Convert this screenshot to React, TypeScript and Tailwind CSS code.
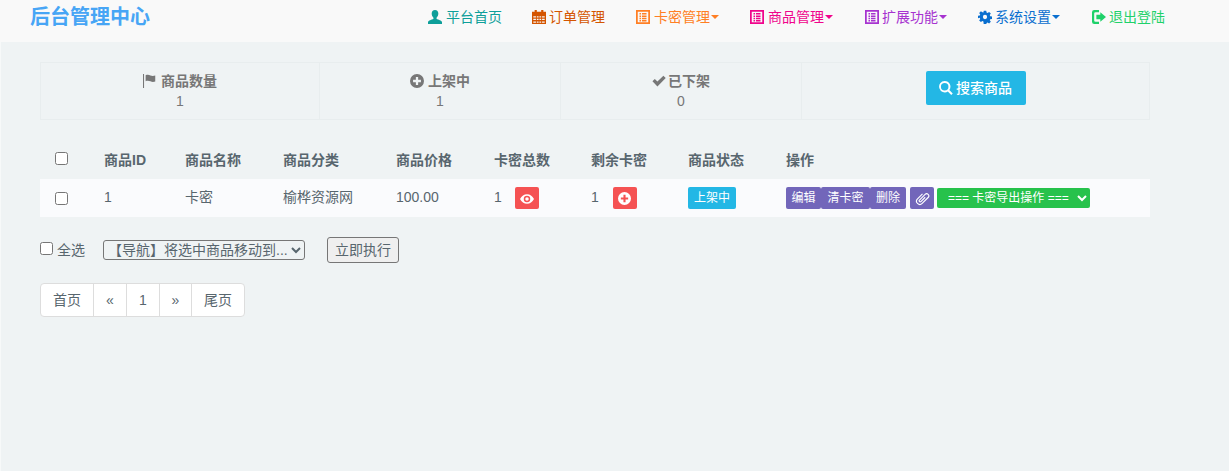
import React from "react";

const Icon = ({ children, className = "" }: { children: React.ReactNode; className?: string }) => (
  <svg viewBox="0 0 16 16" className={`shrink-0 fill-current ${className}`} aria-hidden="true">{children}</svg>
);

type P = { className?: string };

const User = ({ className }: P) => (
  <Icon className={className}><path d="M8 0c2.500 0 3.800 1.800 3.800 4.100 0 2-.9 3.700-2 4.700v1.500c1.900.7 5.900 1.800 6.200 3.500V16H0v-2.200c.3-1.700 4.300-2.800 6.200-3.500V8.800c-1.100-1-2-2.700-2-4.700C4.200 1.800 5.500 0 8 0z" /></Icon>
);
const Calendar = ({ className }: P) => (
  <Icon className={className}><path fillRule="evenodd" d="M3 0h2.500v2h5V0H13v2h3v14H0V2h3V0zM1.500 7v1.500h13V7h-13zm0 3v1.500h13V10h-13zm0 3v1.500h13V13h-13z" /><path d="M4.500 6h1v9h-1zM7.500 6h1v9h-1zM10.500 6h1v9h-1z" /></Icon>
);
const ListAlt = ({ className }: P) => (
  <Icon className={className}><path fillRule="evenodd" d="M0 0h16v16H0V0zm2 2v12h12V2H2zM4 3.500h1.700v1.700H4V3.500zm2.800 0H12v1.700H6.800V3.500zM4 6.200h1.700v1.700H4V6.200zm2.800 0H12v1.700H6.800V6.200zM4 8.900h1.700v1.700H4V8.900zm2.800 0H12v1.700H6.800V8.900zM4 11.300h1.700V13H4v-1.700zm2.800 0H12V13H6.800v-1.700z" /></Icon>
);
const Cog = ({ className }: P) => (
  <Icon className={className}><path fillRule="evenodd" d="M6.400 0h3.200l.4 2.300 1.300.5 1.900-1.300 2.200 2.200-1.300 1.900.5 1.300 2.300.4v3.200l-2.300.4-.5 1.300 1.300 1.900-2.200 2.200-1.900-1.300-1.300.5-.4 2.300H6.400L6 13.700l-1.300-.5-1.900 1.300-2.200-2.200 1.300-1.900-.5-1.300L-.9 9.700V6.400L1.400 6l.5-1.300L.6 2.800l2.200-2.200 1.900 1.300L6 2.300 6.400 0zM8 5.300a2.700 2.700 0 100 5.400 2.700 2.700 0 000-5.400z" transform="translate(.8 .8) scale(.9)" /></Icon>
);
const LogOut = ({ className }: P) => (
  <Icon className={className}><path d="M2.500 0H8v2.500H4A1.500 1.500 0 002.500 4v8A1.500 1.500 0 004 13.500h4V16H2.500A2.500 2.500 0 010 13.500v-11A2.500 2.500 0 012.500 0z" /><path d="M9.500 2.500L16 8l-6.500 5.500V10.500H5v-5h4.500v-3z" /></Icon>
);
const Flag = ({ className }: P) => (
  <Icon className={className}><path d="M0 0h1.200v16H0V0zM3 1.500c2.200-1 3.800-.5 5.500.2 1.700.7 3.500.8 5.500 0v6.800c-2 .8-3.800.6-5.500-.1-1.700-.7-3.300-1.100-5.500-.2V1.500z" /></Icon>
);
const PlusSign = ({ className }: P) => (
  <Icon className={className}><path fillRule="evenodd" d="M8 0a8 8 0 110 16A8 8 0 018 0zM6.700 3.500v3.200H3.500v2.600h3.200v3.200h2.600V9.300h3.200V6.700H9.300V3.500H6.700z" /></Icon>
);
const Check = ({ className }: P) => (
  <Icon className={className}><path d="M.5 8.300l2.700-2.700 3 3L13 2l2.700 2.700-9.500 9.500L.5 8.300z" /></Icon>
);
const Search = ({ className }: P) => (
  <Icon className={className}><path fillRule="evenodd" d="M6.500 0a6.500 6.500 0 015.300 10.300l3.900 3.900-1.700 1.700-3.900-3.900A6.500 6.500 0 116.500 0zm0 2.200a4.300 4.300 0 100 8.600 4.300 4.300 0 000-8.600z" /></Icon>
);
const Eye = ({ className }: P) => (
  <Icon className={className}><path fillRule="evenodd" d="M8 2.500c3.300 0 6.200 2.200 8 5.500-1.800 3.300-4.700 5.500-8 5.500S1.800 11.300 0 8c1.800-3.300 4.700-5.500 8-5.500zM8 4.300a3.700 3.700 0 100 7.400 3.700 3.700 0 000-7.400zM8 6a2 2 0 110 4 2 2 0 010-4z" /></Icon>
);
const Clip = ({ className }: P) => (
  <svg viewBox="0 0 16 16" className={`shrink-0 fill-none stroke-current ${className}`} strokeWidth="1.200" aria-hidden="true">
    <path transform="rotate(45 8 8)" d="M4.500 4.500v7.500a3.500 3.500 0 007 0V3a2.300 2.300 0 00-4.600 0v8.500a1.100 1.100 0 002.200 0V5" />
  </svg>
);

const Caret = ({ className }: P) => (
  <span className={`ml-px h-0 w-0 border-x-4 border-t-4 border-x-transparent ${className}`} />
);

const navItems = [
  { label: "平台首页", Ico: User, color: "text-[#0e9f9a]", w: "w-[74px]", gap: "mr-1" },
  { label: "订单管理", Ico: Calendar, color: "text-[#d45500]", w: "w-[74px]", gap: "mr-[3px]" },
  { label: "卡密管理", Ico: ListAlt, color: "text-[#ff7f24]", caret: "border-t-[#ff7f24]", w: "w-[84px]", gap: "mr-1" },
  { label: "商品管理", Ico: ListAlt, color: "text-[#f0048c]", caret: "border-t-[#f0048c]", w: "w-[85px]", gap: "mr-1" },
  { label: "扩展功能", Ico: ListAlt, color: "text-[#a733d0]", caret: "border-t-[#a733d0]", w: "w-[83px]", gap: "mr-[3px]" },
  { label: "系统设置", Ico: Cog, color: "text-[#0a6fcf]", caret: "border-t-[#0a6fcf]", w: "w-[84px]", gap: "mr-[3px]" },
  { label: "退出登陆", Ico: LogOut, color: "text-[#1fd16a]", w: "w-[74px]", gap: "mr-[3px]" },
];

const th = "h-[38px] pl-[15px] text-left align-middle font-bold text-[#58666e]";
const td = "h-[38px] pl-[15px] align-middle font-normal text-[#58666e]";
const tdText = "h-[38px] pb-0.5 pl-[15px] align-middle font-normal text-[#58666e]";
const statCell = "flex flex-col items-center border-r border-[#e8edee] pt-2 text-[#777]";

export default function App() {
  return (
    <div className="flex min-h-[471px] flex-col bg-[#eff3f4] font-['Liberation_Sans','Noto_Sans_CJK_SC',sans-serif] text-sm text-[#58666e]">
      <header className="flex h-[42px] items-start bg-[#f9f9f9]">
        <h1 className="ml-[30px] h-[34px] text-xl leading-[34px] font-bold text-[#47a5f5]">后台管理中心</h1>
        <nav className="ml-[278px] flex h-[34px] items-center gap-[30px]">
          {navItems.map(({ label, Ico, color, caret, w, gap }) => (
            <a key={label} href="#" className={`flex items-center ${w} ${color}`}>
              <Ico className={`h-[14px] w-[14px] ${gap}`} />
              <span>{label}</span>
              {caret && <Caret className={caret} />}
            </a>
          ))}
        </nav>
      </header>

      <main className="flex-1 border-l border-[#f7f9f9] pr-10 pl-[39px] pt-5">
        <section className="flex h-[58px] w-[1110px] border border-[#e8edee]">
          <div className={`w-[279px] ${statCell}`}>
            <div className="flex items-center gap-1 leading-5 font-bold"><Flag className="h-[14px] w-[14px]" />商品数量</div>
            <div className="leading-5">1</div>
          </div>
          <div className={`w-[241px] ${statCell}`}>
            <div className="flex items-center gap-1 leading-5 font-bold"><PlusSign className="h-[14px] w-[14px]" />上架中</div>
            <div className="leading-5">1</div>
          </div>
          <div className={`w-[241px] ${statCell}`}>
            <div className="flex items-center gap-0.5 leading-5 font-bold"><Check className="h-[14px] w-[14px]" />已下架</div>
            <div className="leading-5">0</div>
          </div>
          <div className="flex flex-1 justify-center pt-2">
            <button className="flex h-[34px] w-[100px] items-center justify-center gap-[3px] rounded-[2px] bg-[#23b7e5] font-medium text-white">
              <Search className="h-[14px] w-[14px]" />搜索商品
            </button>
          </div>
        </section>

        <table className="mt-[21px] w-[1110px] table-fixed border-collapse">
          <colgroup>
            <col className="w-[49px]" /><col className="w-[81px]" /><col className="w-[98px]" /><col className="w-[113px]" />
            <col className="w-[98px]" /><col className="w-[97px]" /><col className="w-[97px]" /><col className="w-[98px]" /><col />
          </colgroup>
          <thead>
            <tr>
              <th className={th}><input type="checkbox" className="mb-[3px] block" /></th>
              <th className={th}>商品ID</th>
              <th className={th}>商品名称</th>
              <th className={th}>商品分类</th>
              <th className={th}>商品价格</th>
              <th className={th}>卡密总数</th>
              <th className={th}>剩余卡密</th>
              <th className={th}>商品状态</th>
              <th className={th}>操作</th>
            </tr>
          </thead>
          <tbody>
            <tr className="bg-[#fafbfd]">
              <td className={td}><input type="checkbox" className="block" /></td>
              <td className={tdText}>1</td>
              <td className={tdText}>卡密</td>
              <td className={tdText}>榆桦资源网</td>
              <td className={tdText}>100.00</td>
              <td className={td}>
                <div className="flex items-center">
                  <span className="mb-0.5">1</span><span className="ml-[13px] flex h-[22px] w-6 items-center justify-center rounded-[2px] bg-[#f55253] text-white"><Eye className="mt-0.5 h-[14px] w-[14px]" /></span>
                </div>
              </td>
              <td className={td}>
                <div className="flex items-center">
                  <span className="mb-0.5">1</span><span className="ml-[14px] flex h-[22px] w-6 items-center justify-center rounded-[2px] bg-[#f55253] text-white"><PlusSign className="h-[13px] w-[13px]" /></span>
                </div>
              </td>
              <td className={td}>
                <span className="flex h-[22px] w-12 items-center justify-center rounded-[2px] bg-[#23b7e5] text-xs text-white">上架中</span>
              </td>
              <td className={td}>
                <div className="flex items-center text-xs text-white">
                  <div className="flex h-[22px]">
                    <span className="flex w-[35px] items-center justify-center rounded-[2px] bg-[#7266ba]">编辑</span>
                    <span className="flex w-[49px] items-center justify-center rounded-[2px] bg-[#7266ba]">清卡密</span>
                    <span className="flex w-9 items-center justify-center rounded-[2px] bg-[#7266ba]">删除</span>
                  </div>
                  <span className="ml-1 flex h-[22px] w-6 items-center justify-center rounded-[2px] bg-[#7266ba]"><Clip className="h-[15px] w-[15px]" /></span>
                  <select className="ml-[3px] h-5 w-[153px] rounded-[2px] bg-[#27c24c] pl-[7px] text-white">
                    <option>=== 卡密导出操作 ===</option>
                  </select>
                </div>
              </td>
            </tr>
          </tbody>
        </table>

        <div className="mt-5 flex items-center">
          <label className="flex items-center gap-1">
            <input type="checkbox" className="mb-[3px] block" />全选
          </label>
          <select className="ml-[18px] h-5 w-[202px] rounded-[3px] border border-[#767676] text-[#58666e]">
            <option>【导航】将选中商品移动到...</option>
          </select>
          <button className="ml-[22px] h-[26px] w-[72px] rounded-[3px] border border-[#767676] bg-[#efefef] text-[#58666e]">立即执行</button>
        </div>

        <nav className="mt-5 flex h-[34px] w-fit rounded border border-[#dddddd] bg-white text-[#58666e]">
          <a href="#" className="flex w-[53px] items-center justify-center border-r border-[#dddddd]">首页</a>
          <a href="#" className="flex w-[33px] items-center justify-center border-r border-[#dddddd]">«</a>
          <a href="#" className="flex w-[33px] items-center justify-center border-r border-[#dddddd]">1</a>
          <a href="#" className="flex w-8 items-center justify-center border-r border-[#dddddd]">»</a>
          <a href="#" className="flex w-[52px] items-center justify-center">尾页</a>
        </nav>
      </main>
    </div>
  );
}
